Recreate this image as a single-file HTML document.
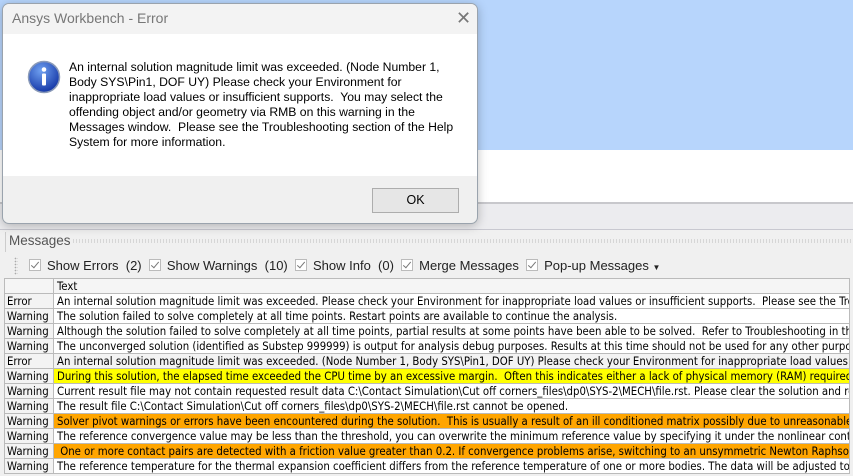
<!DOCTYPE html>
<html><head><style>
*{margin:0;padding:0;box-sizing:border-box}
body{width:853px;height:476px;overflow:hidden;background:#f0f0f0;position:relative;font-family:"Liberation Sans",sans-serif}
.abs{position:absolute}
.tb{font-size:13px;color:#222;white-space:nowrap}
.cb{display:inline-block;width:12px;height:12px;border:1px solid #bbb;background:#fff;vertical-align:-1px;position:relative;margin-right:6px}
.cb:after{content:"";position:absolute;left:3px;top:0px;width:3px;height:7px;border:solid #777;border-width:0 1.5px 1.5px 0;transform:rotate(40deg)}
table{border-collapse:collapse;font-size:11.3px;font-family:"DejaVu Sans Condensed","Liberation Sans",sans-serif;table-layout:fixed}
td{height:15px;border:1px solid #bbb;white-space:nowrap;overflow:hidden;padding:0 3px;line-height:13px;color:#000;background:#fff}
td.l{background:#f3f3f3;width:49px;padding-left:2px}
</style></head><body>
<div class="abs" style="left:0;top:0;width:853px;height:150px;background:#b7d5fc"></div>
<div class="abs" style="left:0;top:150px;width:853px;height:53px;background:#fff"></div>
<div class="abs" style="left:0;top:202px;width:853px;height:2px;background:#c8c8cc"></div>
<div class="abs" style="left:0;top:204px;width:853px;height:25px;background:#ececef"></div>
<div class="abs" style="left:0;top:229px;width:853px;height:1px;background:#c8c8d0"></div>
<!-- Messages panel -->
<div class="abs" style="left:5px;top:232px;width:848px;height:20px;background:#f0f0f0;border-left:1px solid #ccc"></div>
<div class="abs" style="left:9px;top:233px;font-size:13.5px;color:#555">Messages</div>
<div class="abs" style="left:72px;top:239px;width:781px;height:4px;background-image:radial-gradient(#bbb 0.6px,transparent 0.8px);background-size:3px 2px"></div>
<div class="abs" style="left:14px;top:257px;width:4px;height:18px;background-image:radial-gradient(#aaa 0.7px,transparent 0.9px);background-size:3px 3px"></div>
<div class="abs tb" style="left:29px;top:258px"><span class="cb"></span>Show Errors&nbsp; (2)&nbsp; <span class="cb"></span>Show Warnings&nbsp; (10)&nbsp; <span class="cb"></span>Show Info&nbsp; (0)&nbsp; <span class="cb"></span>Merge Messages&nbsp; <span class="cb"></span>Pop-up Messages <span style="font-size:8px">▼</span></div>
<div class="abs" style="left:4px;top:278px;width:849px;height:198px;overflow:hidden;background:#f0f0f0">
<table style="width:846px">
<tr><td class="l" style="background:#f5f5f5"></td><td style="background:#f5f5f5">Text</td></tr>
<tr><td class="l">Error</td><td>An internal solution magnitude limit was exceeded. Please check your Environment for inappropriate load values or insufficient supports.&nbsp; Please see the Troubleshooting</td></tr>
<tr><td class="l">Warning</td><td>The solution failed to solve completely at all time points. Restart points are available to continue the analysis.</td></tr>
<tr><td class="l">Warning</td><td>Although the solution failed to solve completely at all time points, partial results at some points have been able to be solved.&nbsp; Refer to Troubleshooting in the help</td></tr>
<tr><td class="l">Warning</td><td>The unconverged solution (identified as Substep 999999) is output for analysis debug purposes. Results at this time should not be used for any other purpose.</td></tr>
<tr><td class="l">Error</td><td style="background:#f3f3f3">An internal solution magnitude limit was exceeded. (Node Number 1, Body SYS\Pin1, DOF UY) Please check your Environment for inappropriate load values or</td></tr>
<tr><td class="l">Warning</td><td style="background:#ffff00">During this solution, the elapsed time exceeded the CPU time by an excessive margin.&nbsp; Often this indicates either a lack of physical memory (RAM) required to</td></tr>
<tr><td class="l">Warning</td><td>Current result file may not contain requested result data C:\Contact Simulation\Cut off corners_files\dp0\SYS-2\MECH\file.rst. Please clear the solution and resolve</td></tr>
<tr><td class="l">Warning</td><td>The result file C:\Contact Simulation\Cut off corners_files\dp0\SYS-2\MECH\file.rst cannot be opened.</td></tr>
<tr><td class="l">Warning</td><td style="background:#ffa500">Solver pivot warnings or errors have been encountered during the solution.&nbsp; This is usually a result of an ill conditioned matrix possibly due to unreasonable</td></tr>
<tr><td class="l">Warning</td><td>The reference convergence value may be less than the threshold, you can overwrite the minimum reference value by specifying it under the nonlinear controls</td></tr>
<tr><td class="l">Warning</td><td style="background:#ffa500">&nbsp;One or more contact pairs are detected with a friction value greater than 0.2. If convergence problems arise, switching to an unsymmetric Newton Raphson</td></tr>
<tr><td class="l">Warning</td><td>The reference temperature for the thermal expansion coefficient differs from the reference temperature of one or more bodies. The data will be adjusted to</td></tr>
</table></div>
<!-- Dialog -->
<div class="abs" style="left:2px;top:3px;width:476px;height:221px;border:1px solid #9aa3ad;border-radius:7px;overflow:hidden;box-shadow:0 2px 10px rgba(0,0,0,.25);background:#f0f0f0">
<div style="height:30px;background:#f3f3f3;position:relative">
<div class="abs" style="left:9px;top:6px;font-size:14px;color:#777">Ansys Workbench - Error</div>
<div class="abs" style="left:453px;top:4px;font-size:18px;color:#777;font-weight:300">✕</div>
</div>
<div style="height:142px;background:#fff;position:relative">
<svg class="abs" style="left:24px;top:26px" width="34" height="34" viewBox="0 0 34 34"><defs><radialGradient id="g" cx="40%" cy="30%" r="70%"><stop offset="0" stop-color="#6fa0f0"/><stop offset="1" stop-color="#1538a8"/></radialGradient></defs><circle cx="17" cy="17" r="15.5" fill="url(#g)" stroke="#8a9ab8" stroke-width="1.5"/><circle cx="17" cy="9.5" r="2.3" fill="#fff"/><rect x="15" y="13.5" width="4" height="12" rx="1" fill="#fff"/></svg>
<div class="abs" style="left:66px;top:26px;width:400px;font-size:12.2px;line-height:15px;color:#000">An internal solution magnitude limit was exceeded. (Node Number 1, Body SYS\Pin1, DOF UY) Please check your Environment for inappropriate load values or insufficient supports.&nbsp; You may select the offending object and/or geometry via RMB on this warning in the Messages window.&nbsp; Please see the Troubleshooting section of the Help System for more information.</div>
</div>
<div class="abs" style="left:369px;top:184px;width:87px;height:25px;border:1px solid #adadad;background:#e6e6e6;font-size:12.5px;text-align:center;line-height:23px;color:#000">OK</div>
</div>
</body></html>
